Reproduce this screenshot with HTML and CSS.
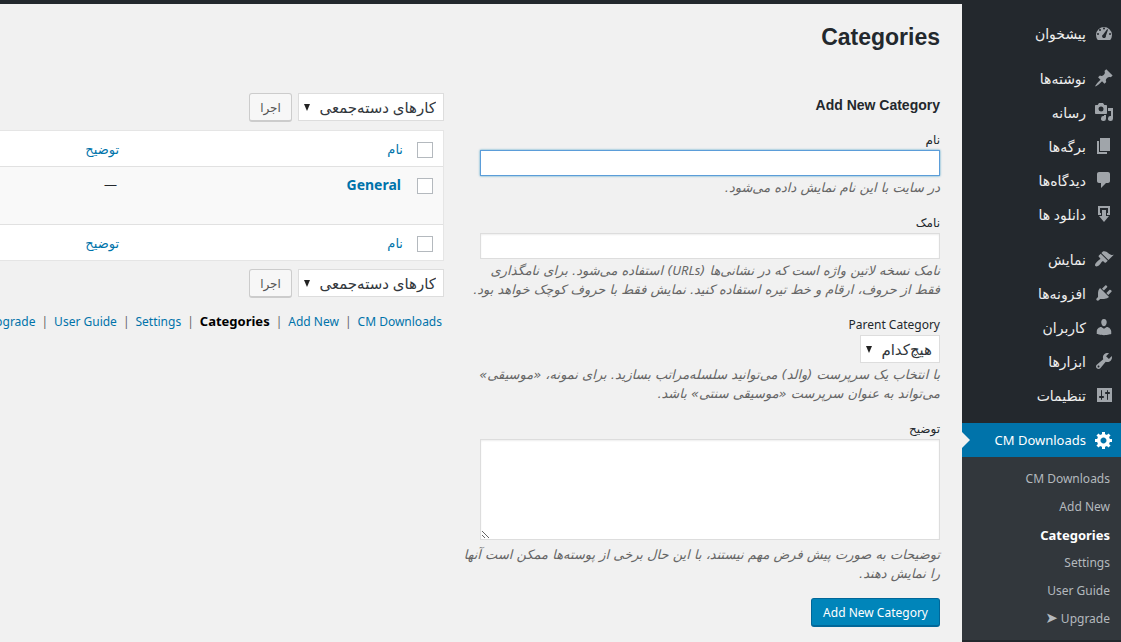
FILE: index.html
```html
<!DOCTYPE html>
<html lang="fa" dir="rtl">
<head>
<meta charset="utf-8">
<title>Categories</title>
<link rel="stylesheet" href="styles.css">
</head>
<body>
<div class="topbar"></div>
<div class="layout">
<nav class="sidebar">
  <ul class="menu">
    <li><a class="item" href="#"><svg class="icon" viewBox="0 0 20 20"><path fill-rule="evenodd" d="M3.76 17h12.48A8 8 0 1 0 3.76 17zM10 4.5a1 1 0 1 1 0 2 1 1 0 0 1 0-2zM6 6a1 1 0 1 1 0 2 1 1 0 0 1 0-2zM13.6 6.200c.4.2.4.5.3.9l-2 5.700c.2 1.200-.6 2.200-1.900 2.200s-2.200-1.300-1.800-2.400c.2-.6.500-.9 1-1.200l3.700-4.900c.2-.3.400-.4.700-.3zM4 10a1 1 0 1 1 0 2 1 1 0 0 1 0-2zM16 10a1 1 0 1 1 0 2 1 1 0 0 1 0-2z"/></svg>پیشخوان</a></li>
    <li class="gap"><a class="item" href="#"><svg class="icon" viewBox="0 0 20 20"><path d="M10.440 3.020l1.820-1.820 6.360 6.350-1.830 1.820c-1.050-.68-2.480-.57-3.410.36l-.75.75c-.92.93-1.040 2.350-.35 3.410l-1.830 1.820-2.410-2.410-2.800 2.790c-.42.42-3.380 2.710-3.800 2.290s1.860-3.390 2.280-3.810l2.790-2.790L4.100 9.370l1.830-1.820c1.050.69 2.480.57 3.400-.36l.75-.75c.93-.92 1.050-2.350.36-3.420z"/></svg>نوشته‌ها</a></li>
    <li><a class="item" href="#"><svg class="icon" viewBox="0 0 20 20"><path fill-rule="evenodd" d="M13 11V4c0-.55-.45-1-1-1h-1.670L9 1H5L3.670 3H2c-.55 0-1 .45-1 1v7c0 .55.45 1 1 1h10c.55 0 1-.45 1-1zM7 4.500a2.500 2.500 0 1 1 0 5 2.500 2.500 0 0 1 0-5zM14 6h5v10.500a2.500 2.500 0 1 1-2-2.450V9h-3V6zM10 14.050V13h2v3.500a2.500 2.500 0 1 1-2-2.450z"/></svg>رسانه</a></li>
    <li><a class="item" href="#"><svg class="icon" viewBox="0 0 20 20"><path d="M6 15V2h10v13H6zm-1 1h8v2H3V5h2v11z"/></svg>برگه‌ها</a></li>
    <li><a class="item" href="#"><svg class="icon" viewBox="0 0 20 20"><path d="M5 2h9c1.100 0 2 .9 2 2v7c0 1.100-.9 2-2 2h-2l-5 5v-5H5c-1.100 0-2-.9-2-2V4c0-1.100.9-2 2-2z"/></svg>دیدگاه‌ها</a></li>
    <li><a class="item" href="#"><svg class="icon" viewBox="0 0 20 20"><path d="M4 2h12v9h-3V9h1V4H6v5h1v2H4zM8 6h4v6h3l-5 6-5-6h3z"/></svg>دانلود ها</a></li>
    <li class="gap"><a class="item" href="#"><svg class="icon" viewBox="0 0 20 20"><path d="M14.480 11.060L7.410 3.990l1.500-1.500c.5-.56 2.300-.47 3.510.32 1.210.8 1.430 1.280 2.910 2.100 1.180.64 2.450 1.260 4.450.85zm-.71.71L6.700 4.700 4.930 6.470c-.39.39-.39 1.020 0 1.410l1.060 1.060c.39.39.39 1.030 0 1.420-.6.6-1.430 1.110-2.210 1.690-.35.26-.7.53-1.010.84C1.430 14.230.4 16.080 1.400 17.070c.99 1 2.840-.03 4.180-1.360.31-.31.58-.66.85-1.020.57-.78 1.080-1.610 1.690-2.210.39-.39 1.020-.39 1.410 0l1.060 1.060c.39.39 1.020.39 1.410 0z"/></svg>نمایش</a></li>
    <li><a class="item" href="#"><svg class="icon" viewBox="0 0 20 20"><path d="M13.110 4.360L9.870 7.600 8 5.730l3.240-3.240c.35-.34 1.050-.2 1.560.32.52.51.66 1.210.31 1.550zm-8 1.770l.91-1.120 9.010 9.010-1.190.84c-.71.71-2.630 1.160-3.820 1.160H6.140L4.900 17.260c-.59.59-1.540.59-2.120 0-.59-.58-.59-1.530 0-2.120l1.240-1.240v-3.880c0-1.130.4-3.190 1.090-3.890zm7.260 3.970l3.240-3.240c.34-.35 1.040-.21 1.550.31.52.51.66 1.210.31 1.550l-3.240 3.250z"/></svg>افزونه‌ها</a></li>
    <li><a class="item" href="#"><svg class="icon" viewBox="0 0 20 20"><path d="M10 9.250c-2.270 0-2.730-3.440-2.730-3.440C7 4.020 7.820 2 9.970 2c2.160 0 2.980 2.020 2.710 3.810 0 0-.41 3.440-2.680 3.440zm0 2.570L12.720 10c2.390 0 4.520 2.330 4.520 4.530v2.490s-3.650 1.130-7.240 1.130c-3.650 0-7.240-1.130-7.240-1.130v-2.490c0-2.250 1.940-4.480 4.470-4.480z"/></svg>کاربران</a></li>
    <li><a class="item" href="#"><svg class="icon" viewBox="0 0 20 20"><path fill-rule="evenodd" d="M16.680 9.770c-1.340 1.340-3.300 1.670-4.950.99l-5.410 6.520c-.99.99-2.590.99-3.580 0s-.99-2.590 0-3.570l6.520-5.420c-.68-1.650-.35-3.610.99-4.950 1.280-1.280 3.120-1.620 4.720-1.060l-2.890 2.890 2.820 2.820 2.860-2.870c.53 1.580.18 3.390-1.080 4.650zM3.810 16.210c.4.39 1.040.39 1.430 0 .4-.4.4-1.040 0-1.430-.39-.4-1.030-.4-1.430 0-.39.39-.39 1.030 0 1.430z"/></svg>ابزارها</a></li>
    <li><a class="item" href="#"><svg class="icon" viewBox="0 0 20 20"><path fill-rule="evenodd" d="M18 17V3H3v14h15zM8 11h1c.55 0 1 .45 1 1s-.45 1-1 1H8v1.500c0 .28-.22.5-.5.5s-.5-.22-.5-.5V13H6c-.55 0-1-.45-1-1s.45-1 1-1h1V5.500c0-.28.22-.5.5-.5s.5.22.5.5V11zm5-2h-1c-.55 0-1-.45-1-1s.45-1 1-1h1V5.500c0-.28.22-.5.5-.5s.5.22.5.5V7h1c.55 0 1 .45 1 1s-.45 1-1 1h-1v5.500c0 .28-.22.5-.5.5s-.5-.22-.5-.5V9z"/></svg>تنظیمات</a></li>
    <li class="gap"><a class="item current" href="#"><svg class="icon" viewBox="0 0 20 20"><path fill-rule="evenodd" d="M18 12h-2.180c-.17.7-.44 1.350-.81 1.930l1.540 1.540-2.100 2.100-1.540-1.540c-.58.36-1.230.63-1.910.79V19H8v-2.180c-.68-.16-1.330-.43-1.910-.79l-1.540 1.540-2.120-2.120 1.540-1.540c-.36-.58-.63-1.230-.79-1.910H1V9.030h2.170c.16-.7.44-1.350.8-1.940L2.430 5.550l2.100-2.100 1.540 1.540c.58-.37 1.240-.64 1.930-.81V2h3v2.180c.68.16 1.330.43 1.910.79l1.540-1.540 2.120 2.120-1.540 1.540c.36.59.64 1.240.8 1.940H18V12zM9.500 13.500c1.660 0 3-1.340 3-3s-1.340-3-3-3-3 1.340-3 3 1.340 3 3 3z"/></svg><bdi>CM Downloads</bdi></a>
      <ul class="submenu">
        <li><a href="#">CM Downloads</a></li>
        <li><a href="#">Add New</a></li>
        <li><a class="active" href="#">Categories</a></li>
        <li><a href="#">Settings</a></li>
        <li><a href="#">User Guide</a></li>
        <li><a href="#"><bdi dir="ltr"><span class="arrow">➤</span> Upgrade</bdi></a></li>
      </ul>
    </li>
  </ul>
</nav>
<main class="main">
  <h1>Categories</h1>
  <div class="columns">
    <form class="form">
      <h2>Add New Category</h2>
      <div class="field">
        <label for="name">نام</label>
        <input class="text focused" id="name" type="text">
        <p>در سایت با این نام نمایش داده می‌شود.</p>
      </div>
      <div class="field">
        <label for="slug">نامک</label>
        <input class="text" id="slug" type="text">
        <p>نامک نسخه لاتین واژه است که در نشانی‌ها (<span class="latin">URLs</span>) استفاده می‌شود. برای نامگذاری<br>فقط از حروف، ارقام و خط تیره استفاده کنید. نمایش فقط با حروف کوچک خواهد بود.</p>
      </div>
      <div class="field">
        <label for="parent">Parent Category</label>
        <select class="select" id="parent"><option>هیچ‌کدام</option></select>
        <p>با انتخاب یک سرپرست (والد) می‌توانید سلسله‌مراتب بسازید. برای نمونه، «موسیقی»<br>می‌تواند به عنوان سرپرست «موسیقی سنتی» باشد.</p>
      </div>
      <div class="field last">
        <label for="desc">توضیح</label>
        <textarea id="desc"></textarea>
        <p>توضیحات به صورت پیش فرض مهم نیستند، با این حال برخی از پوسته‌ها ممکن است آنها<br>را نمایش دهند.</p>
      </div>
      <button class="primary" type="button">Add New Category</button>
    </form>
    <section class="list">
      <div class="bulk">
        <select class="select wide" aria-label="کارهای دسته‌جمعی"><option>کارهای دسته‌جمعی</option></select>
        <button class="button" type="button">اجرا</button>
      </div>
      <table class="table">
        <thead><tr><th class="check"><input type="checkbox" aria-label="همه"></th><th class="name"><a href="#">نام</a></th><th><a href="#">توضیح</a></th></tr></thead>
        <tbody><tr><td class="check"><input type="checkbox" aria-label="General"></td><td class="name"><a class="title" href="#">General</a></td><td>—</td></tr></tbody>
        <tfoot><tr><th class="check"><input type="checkbox" aria-label="همه"></th><th class="name"><a href="#">نام</a></th><th><a href="#">توضیح</a></th></tr></tfoot>
      </table>
      <div class="bulk">
        <select class="select wide" aria-label="کارهای دسته‌جمعی"><option>کارهای دسته‌جمعی</option></select>
        <button class="button" type="button">اجرا</button>
      </div>
      <div class="links">
        <a href="#">CM Downloads</a><span>|</span><a href="#">Add New</a><span>|</span><strong>Categories</strong><span>|</span><a href="#">Settings</a><span>|</span><a href="#">User Guide</a><span>|</span><a href="#">Upgrade</a>
      </div>
    </section>
  </div>
</main>
</div>
</body>
</html>
```
FILE: styles.css
```css
* { box-sizing: border-box; }
body {
  margin: 0;
  min-height: 100vh;
  display: flex;
  flex-direction: column;
  overflow: hidden;
  background: #f1f1f1;
  color: #23282d;
  font: 12px/19px "Noto Sans", "DejaVu Sans", sans-serif;
}
a { color: #0073aa; text-decoration: none; }
ul { list-style: none; margin: 0; padding: 0; }
input, select, button, textarea { font: inherit; color: #32373c; }

.topbar { height: 4px; background: #23282d; }
.layout { display: flex; flex: 1; }

.sidebar {
  flex: 0 0 159px;
  padding-top: 12px;
  background: #23282d;
}
.item {
  position: relative;
  display: flex;
  align-items: center;
  gap: 8px;
  height: 34px;
  padding-right: 7px;
  color: #eee;
  font-size: 14px;
  white-space: nowrap;
}
.gap { margin-top: 11px; }
.icon { flex: none; width: 20px; height: 20px; fill: #a0a5aa; }
.current { background: #0073aa; color: #fff; font-size: 13px; }
.current .icon { fill: #fff; }
.current::after {
  content: "";
  position: absolute;
  left: 0;
  top: 9px;
  border: 8px solid transparent;
  border-left-color: #f1f1f1;
  border-right-width: 0;
}
.submenu { padding: 8px 11px 7px; background: #32373c; }
.submenu a { display: block; line-height: 28px; color: #b4b9be; }
.submenu .active { color: #fff; font-size: 13px; font-weight: bold; }
.arrow { font-size: 15px; line-height: 1; }

.main { flex: 1; min-width: 0; overflow: hidden; padding: 18px 22px 0 0; }
h1, h2 { margin: 0; font-family: "Liberation Sans", sans-serif; }
h1 { font-size: 23px; line-height: 30px; }
h2 { font-size: 14px; line-height: 20px; }
.columns { display: grid; grid-template-columns: 475px 1fr; gap: 21px; margin-top: 37px; }

.form { display: flex; flex-direction: column; align-items: flex-start; padding-top: 6px; }
.field { display: flex; flex-direction: column; align-items: flex-start; width: 100%; margin-bottom: 15px; }
h2 + .field { margin-top: 14px; }
.field label { line-height: 21px; }
.field p {
  margin: 2px 0 0;
  color: #666;
  font-family: "DejaVu Sans", sans-serif;
  font-size: 13px;
  font-style: italic;
  white-space: nowrap;
}
.latin { font-family: "Noto Sans", sans-serif; }
.text, textarea {
  width: 460px;
  border: 1px solid #ddd;
  background: #fff;
  box-shadow: inset 0 1px 2px rgba(0, 0, 0, .07);
}
.text { height: 26px; padding: 2px 5px; }
.focused { border-color: #5b9dd9; box-shadow: 0 0 2px rgba(30, 140, 190, .8); outline: 0; }
textarea { display: block; height: 101px; margin-bottom: 3px; resize: both; }
.select {
  appearance: none;
  height: 28px;
  padding: 0 7px 0 20px;
  border: 1px solid #ddd;
  border-radius: 0;
  background: #fff url("data:image/svg+xml,%3Csvg xmlns='http://www.w3.org/2000/svg' width='6' height='7'%3E%3Cpath d='M0 0h6L3 7z' fill='%23222'/%3E%3C/svg%3E") no-repeat 5px 10px;
  font-size: 15px;
}
.wide { width: 146px; }
.primary {
  height: 29px;
  padding: 0 11px;
  border: 1px solid #006799;
  border-bottom-width: 2px;
  border-radius: 3px;
  background: #0085ba;
  color: #fff;
}

.list { min-width: 0; padding-top: 4px; }
.bulk { display: flex; gap: 6px; }
.button {
  width: 43px;
  height: 29px;
  padding: 0;
  border: 1px solid #ccc;
  border-bottom-width: 2px;
  border-radius: 3px;
  background: #f7f7f7;
  color: #555;
}
.table {
  width: 100%;
  margin: 8px 0;
  table-layout: fixed;
  border-spacing: 0;
  border: 1px solid #e5e5e5;
  border-left: 0;
  background: #fff;
  font-size: 13px;
}
.table th, .table td { padding: 9px 0 7px; text-align: right; vertical-align: top; font-weight: normal; }
.table td { height: 59px; padding: 8px 2px 0 0; border: solid #e1e1e1; border-width: 1px 0; background: #f9f9f9; }
.table .check { width: 40px; padding: 11px 10px 0 0; }
.table .name { width: 284px; }
.table .title { font-size: 14px; font-weight: bold; }
.check input { appearance: none; display: block; width: 16px; height: 16px; margin: 0; border: 1px solid #b4b9be; background: #fff; }
.links { display: flex; gap: 6px; margin: 14px 2px 0 0; white-space: nowrap; }
.links span { color: #666; }
.links strong { color: #000; font-size: 13px; }
```
